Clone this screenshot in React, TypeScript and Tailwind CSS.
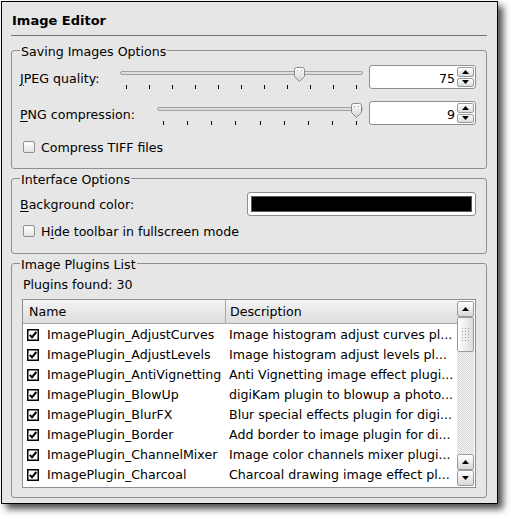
// Image Editor settings page (digiKam style)
import React from 'react';

const plugins: [string, string][] = [
  ['ImagePlugin_AdjustCurves', 'Image histogram adjust curves pl...'],
  ['ImagePlugin_AdjustLevels', 'Image histogram adjust levels pl...'],
  ['ImagePlugin_AntiVignetting', 'Anti Vignetting image effect plugi...'],
  ['ImagePlugin_BlowUp', 'digiKam plugin to blowup a photo...'],
  ['ImagePlugin_BlurFX', 'Blur special effects plugin for digi...'],
  ['ImagePlugin_Border', 'Add border to image plugin for di...'],
  ['ImagePlugin_ChannelMixer', 'Image color channels mixer plugi...'],
  ['ImagePlugin_Charcoal', 'Charcoal drawing image effect pl...'],
];

const Arrow: React.FC<{ up?: boolean }> = ({ up }) => (
  <svg width="7" height="4" viewBox="0 0 7 4">
    {up ? <path d="M0 4 L3.5 0 L7 4 Z" fill="#000" /> : <path d="M0 0 L3.5 4 L7 0 Z" fill="#000" />}
  </svg>
);

const Thumb: React.FC = () => (
  <svg width="13" height="15" viewBox="0 0 13 15">
    <defs>
      <linearGradient id="tg" x1="0" y1="0" x2="0" y2="1">
        <stop offset="0" stopColor="#ffffff" />
        <stop offset="1" stopColor="#d2d2d2" />
      </linearGradient>
    </defs>
    <path
      d="M1.5 2.5 Q1.5 0.5 3.5 0.5 H9.5 Q11.5 0.5 11.5 2.5 V9.5 L6.5 14.5 L1.5 9.5 Z"
      fill="url(#tg)"
      stroke="#8a8a8a"
    />
    <rect x="4" y="3" width="1" height="1" fill="#a0a0a0" />
    <rect x="8" y="3" width="1" height="1" fill="#a0a0a0" />
  </svg>
);

const Slider: React.FC<{ min: number; max: number; value: number }> = ({ min, max, value }) => {
  const frac = (value - min) / (max - min);
  const ticks = Array.from({ length: max - min + 1 });
  return (
    <div className="relative flex-1 h-[24px]">
      <div className="absolute left-0 right-0 top-[6px] h-[4px] rounded-full border border-[#a0a0a0] bg-[#dedede]" />
      <div className="absolute left-0 right-0 top-[20px] flex justify-between px-[6px]">
        {ticks.map((_, i) => (
          <div key={i} className="w-px h-[4px] bg-black" />
        ))}
      </div>
      <div className="absolute top-[2px]" style={{ left: `calc(${frac} * (100% - 13px))` }}>
        <Thumb />
      </div>
    </div>
  );
};

const SpinBox: React.FC<{ value: number }> = ({ value }) => (
  <div className="flex w-[107px] h-[24px] rounded-[3px] border border-[#8f8f8f] bg-white">
    <div className="flex-1 flex items-center justify-end pr-[2px] pt-[3px]">{value}</div>
    <div className="flex flex-col w-[18px] py-px pr-px gap-px">
      <div className="flex-1 flex items-center justify-center rounded-[2px] border border-[#9a9a9a] bg-gradient-to-b from-white to-[#dcdcdc]">
        <Arrow up />
      </div>
      <div className="flex-1 flex items-center justify-center rounded-[2px] border border-[#9a9a9a] bg-gradient-to-b from-white to-[#dcdcdc]">
        <Arrow />
      </div>
    </div>
  </div>
);

const CheckBox: React.FC = () => (
  <div className="w-[12px] h-[12px] rounded-[2px] border border-[#8f8f8f] bg-gradient-to-b from-white to-[#e4e4e4]" />
);

const CheckedBox: React.FC = () => (
  <svg width="12" height="12" viewBox="0 0 12 12" className="shrink-0">
    <rect x="0.75" y="0.75" width="10.5" height="10.5" fill="#fff" stroke="#000" strokeWidth="1.5" />
    <path d="M2.8 5.8 L5 8.3 L9.3 3" fill="none" stroke="#000" strokeWidth="2" />
  </svg>
);

const ScrollButton: React.FC<{ up?: boolean }> = ({ up }) => (
  <div className="h-[16px] flex items-center justify-center rounded-[2px] border border-[#9a9a9a] bg-gradient-to-b from-white to-[#d8d8d8]">
    <Arrow up={up} />
  </div>
);

const Group: React.FC<{ title: string; className: string; children: React.ReactNode }> = ({
  title,
  className,
  children,
}) => (
  <fieldset className={`rounded-[3px] border border-[#8f8f8f] pl-[8px] pr-[10px] ${className}`}>
    <legend className="px-px h-[16px] pt-[3px] leading-[13px]">{title}</legend>
    {children}
  </fieldset>
);

export default function App() {
  return (
    <div className="w-[511px] h-[519px] bg-white text-black text-[12.6px] leading-[16px] font-['DejaVu_Sans',sans-serif]">
      <div className="ml-px mt-px w-[497px] h-[503px] border border-black bg-[#e6e6e6] shadow-[5px_5px_7px_rgba(0,0,0,0.7)] flex flex-col pl-[9px] pr-[10px]">
        {/* Title */}
        <div className="h-[33px] pt-[11px] pl-px text-[13px] font-bold">Image Editor</div>
        <div className="h-px bg-[#707070]" />

        {/* Saving Images Options */}
        <Group title="Saving Images Options" className="mt-[6px] h-[127px]">
          <div className="mt-[7px] flex items-center h-[24px]">
            <div className="w-[100px] pt-[3px]">
              <u className="underline-offset-2">J</u>PEG quality:
            </div>
            <Slider min={0} max={10} value={7.5} />
            <div className="ml-[6px]">
              <SpinBox value={75} />
            </div>
          </div>
          <div className="mt-[12px] flex items-center h-[24px]">
            <div className="w-[137px] pt-[3px]">
              <u className="underline-offset-2">P</u>NG compression:
            </div>
            <Slider min={1} max={9} value={9} />
            <div className="ml-[6px]">
              <SpinBox value={9} />
            </div>
          </div>
          <div className="mt-[14px] flex items-center h-[16px] pl-[3px] gap-[6px]">
            <CheckBox />
            <span className="pt-[2px]">Compress TIFF files</span>
          </div>
        </Group>

        {/* Interface Options */}
        <Group title="Interface Options" className="mt-px h-[84px]">
          <div className="mt-[6px] flex items-center justify-between h-[24px]">
            <div className="pt-[1px]">
              <u className="underline-offset-2">B</u>ackground color:
            </div>
            <div className="w-[229px] h-[24px] rounded-[3px] border border-[#8f8f8f] bg-white p-[3px]">
              <div className="h-full bg-black border border-[#5a5a5a]" />
            </div>
          </div>
          <div className="mt-[7px] flex items-center h-[16px] pl-[3px] gap-[6px]">
            <CheckBox />
            <span className="pt-[2px]">
              H<u className="underline-offset-2">i</u>de toolbar in fullscreen mode
            </span>
          </div>
        </Group>

        {/* Image Plugins List */}
        <Group title="Image Plugins List" className="mt-px h-[243px]">
          <div className="mt-[6px] pl-[3px] h-[16px]">Plugins found: 30</div>
          <div className="mt-[6px] ml-[2px] h-[189px] flex border border-[#8f8f8f] bg-white overflow-hidden">
            <div className="flex-1 flex flex-col min-w-0">
              <div className="h-[24px] flex shrink-0 border-b border-[#a8a8a8] bg-gradient-to-b from-[#f4f4f4] to-[#dcdcdc]">
                <div className="w-[203px] flex items-center pl-[6px] pt-px border-r border-[#a8a8a8]">Name</div>
                <div className="flex-1 flex items-center pl-[4px] pt-px">Description</div>
              </div>
              {plugins.map(([name, desc]) => (
                <div key={name} className="h-[20px] shrink-0 flex items-center whitespace-nowrap pt-px">
                  <div className="w-[203px] flex items-center pl-[4px] gap-[8px] overflow-hidden">
                    <CheckedBox />
                    <span>{name}</span>
                  </div>
                  <div className="flex-1 pl-[3px] overflow-hidden">{desc}</div>
                </div>
              ))}
            </div>
            {/* Scrollbar */}
            <div className="w-[18px] flex flex-col py-px pr-px">
              <ScrollButton up />
              <div className="h-[35px] flex items-center justify-center rounded-[2px] border border-[#9a9a9a] bg-gradient-to-r from-white to-[#dcdcdc]">
                <div className="grid grid-cols-3 gap-[2px]">
                  {Array.from({ length: 15 }).map((_, i) => (
                    <div key={i} className="w-px h-px bg-[#a0a0a0]" />
                  ))}
                </div>
              </div>
              <div className="flex-1 bg-[repeating-conic-gradient(#d6d6d6_0_25%,#f6f6f6_0_50%)] bg-[length:2px_2px]" />
              <ScrollButton up />
              <ScrollButton />
            </div>
          </div>
        </Group>
      </div>
    </div>
  );
}
